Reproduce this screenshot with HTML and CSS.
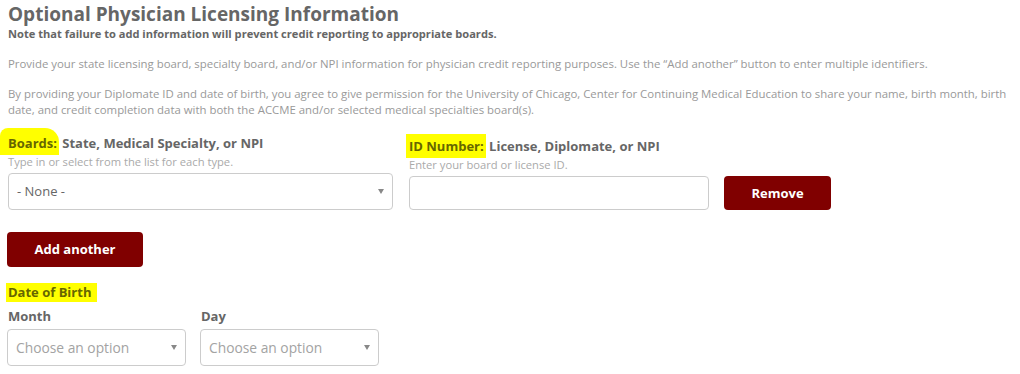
FILE: index.html
```html
<!DOCTYPE html>
<html lang="en">
<head>
  <meta charset="UTF-8" />
  <title>Optional Physician Licensing Information</title>
  <link rel="stylesheet" href="styles.css">
</head>
<body>
  <h1>Optional Physician Licensing Information</h1>
  <p class="note">Note that failure to add information will prevent credit reporting to appropriate boards.</p>

  <p class="info first">Provide your state licensing board, specialty board, and/or NPI information for physician credit reporting purposes. Use the “Add another” button to enter multiple identifiers.</p>
  <p class="info">By providing your Diplomate ID and date of birth, you agree to give permission for the University of Chicago, Center for Continuing Medical Education to share your name, birth month, birth date, and credit completion data with both the ACCME and/or selected medical specialties board(s).</p>

  <div class="row">
    <div class="field board">
      <label><span class="mark mark-boards">Boards:</span> State, Medical Specialty, or NPI</label>
      <div class="help">Type in or select from the list for each type.</div>
      <div class="select">- None -<span class="caret"></span></div>
    </div>
    <div class="field idnum">
      <label><span class="mark mark-id">ID Number:</span> License, Diplomate, or NPI</label>
      <div class="help">Enter your board or license ID.</div>
      <div class="input-row">
        <div class="text"></div>
        <div class="btn btn-remove">Remove</div>
      </div>
    </div>
  </div>

  <div class="btn btn-add">Add another</div>

  <div class="dob"><span class="mark mark-dob">Date of Birth</span></div>
  <div class="row dob-row">
    <div class="field small">
      <label>Month</label>
      <div class="select placeholder">Choose an option<span class="caret"></span></div>
    </div>
    <div class="field small">
      <label>Day</label>
      <div class="select placeholder">Choose an option<span class="caret"></span></div>
    </div>
  </div>
</body>
</html>
```

FILE: styles.css
```css
body {
  margin: 0;
  padding: 3px 8px 0 8px;
  background: #fff;
  color: #666;
  font-family: "Open Sans", Arial, sans-serif;
}

h1 {
  margin: 0;
  font-size: 19px;
  line-height: 22px;
  font-weight: 700;
  color: #666;
}

.note {
  margin: 2px 0 0 0;
  font-size: 11.1px;
  line-height: 14px;
  font-weight: 700;
  color: #666;
}

.info {
  margin: 14px 0 0 0;
  font-size: 11.4px;
  line-height: 16px;
  color: #999;
}

.info.first {
  margin-top: 15px;
}

.row {
  display: flex;
  gap: 16px;
  margin-top: 16px;
}

.field label {
  display: block;
  font-size: 13px;
  line-height: 18px;
  font-weight: 700;
  color: #666;
}

.board {
  width: 385px;
}

.idnum {
  padding-top: 3px;
}

.help {
  margin: 3px 0 4px 0;
  font-size: 11.2px;
  line-height: 14px;
  color: #aaa;
}

.select {
  position: relative;
  height: 37px;
  box-sizing: border-box;
  border: 1px solid #ccc;
  border-radius: 4px;
  padding: 0 8px;
  font-size: 13px;
  line-height: 35px;
  color: #666;
}

.select.placeholder {
  font-size: 13.8px;
  color: #a3a3a3;
}

.caret {
  position: absolute;
  right: 8px;
  top: 15px;
  width: 0;
  height: 0;
  border-left: 3px solid transparent;
  border-right: 3px solid transparent;
  border-top: 5px solid #888;
}

.input-row {
  display: flex;
  gap: 15px;
}

.text {
  width: 300px;
  height: 34px;
  box-sizing: border-box;
  border: 1px solid #ccc;
  border-radius: 4px;
}

.btn {
  background: #800000;
  color: #fff;
  border-radius: 4px;
  font-size: 13px;
  font-weight: 700;
  text-align: center;
  cursor: pointer;
}

.btn-remove {
  width: 107px;
  height: 34px;
  line-height: 34px;
}

.btn-add {
  width: 136px;
  height: 35px;
  line-height: 35px;
  margin-top: 22px;
  margin-left: -1px;
}

.mark {
  background: #ffff00;
  color: #666600;
}

.mark-boards {
  padding: 6px 2px 3px 8px;
  margin-left: -8px;
  border-radius: 8px 14px 0 0;
}

.mark-id {
  padding: 3px 2px 3px 3px;
  margin-left: -3px;
}

.dob {
  margin-top: 16px;
  font-size: 13px;
  line-height: 19px;
  font-weight: 700;
}

.mark-dob {
  display: inline-block;
  padding: 0 6px 0 2px;
  margin-left: -2px;
}

.dob-row {
  margin-top: 5px;
  gap: 14px;
}

.small {
  width: 179px;
  margin-left: -1px;
}

.small + .small {
  margin-left: 0;
}

.small label {
  margin: 0 0 4px 1px;
}
```
